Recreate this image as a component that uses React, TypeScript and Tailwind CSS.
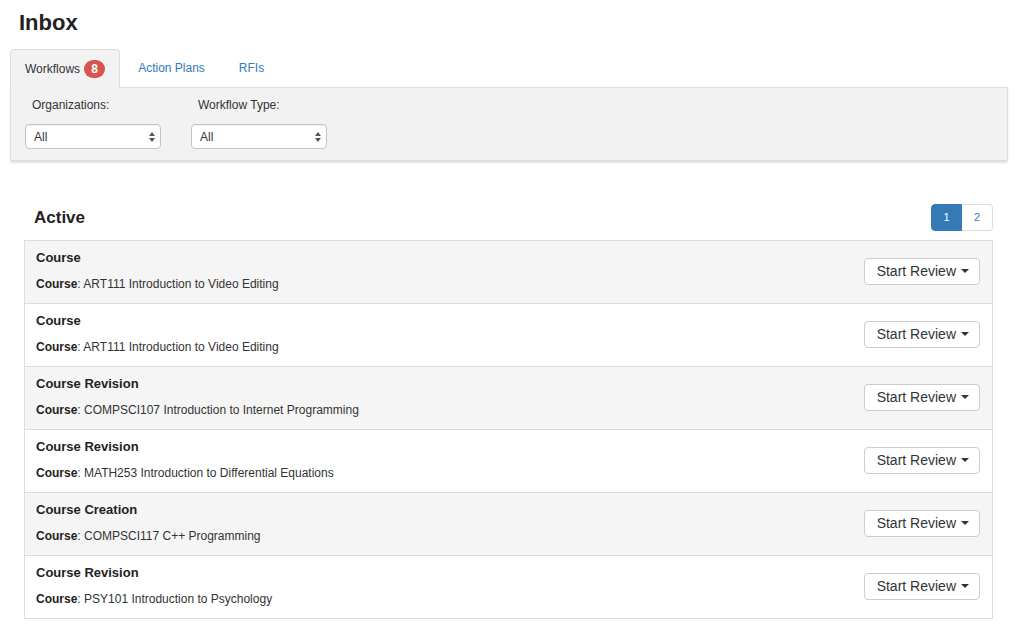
const rows = [
  { type: "Course", course: "ART111 Introduction to Video Editing" },
  { type: "Course", course: "ART111 Introduction to Video Editing" },
  { type: "Course Revision", course: "COMPSCI107 Introduction to Internet Programming" },
  { type: "Course Revision", course: "MATH253 Introduction to Differential Equations" },
  { type: "Course Creation", course: "COMPSCI117 C++ Programming" },
  { type: "Course Revision", course: "PSY101 Introduction to Psychology" },
];

const SelectBox = () => (
  <div className="relative w-[136px] h-[25px] rounded-[4px] border border-[#c4c4c4] bg-white shadow-[inset_0_1px_1px_rgba(0,0,0,0.05)] flex items-center pl-[8px] text-[12px] text-[#333]">
    All
    <svg className="absolute right-[5px] top-[7px]" width="6" height="10" viewBox="0 0 6 10">
      <path d="M3 0 L6 4 L0 4 Z" fill="#555" />
      <path d="M3 10 L6 6 L0 6 Z" fill="#555" />
    </svg>
  </div>
);

export default function App() {
  return (
    <div className="min-h-screen bg-white text-[#333] font-['Liberation_Sans',Arial,sans-serif]">
      <div className="pl-[10px] pr-[15px] pt-[9px]">
        <h1 className="pl-[9px] text-[22px] leading-[28px] font-bold text-[#222]">Inbox</h1>

        <div className="mt-[11px] flex items-end text-[12px]">
          <div className="relative z-10 -mb-px flex items-center h-[39px] px-[14px] rounded-t-[4px] border border-b-0 border-[#ddd] bg-[#f2f2f2] text-[#333]">
            Workflows
            <span className="ml-[4px] inline-flex items-center justify-center h-[18px] min-w-[21px] px-[6px] rounded-full bg-[#d9534f] text-white font-bold text-[12px]">
              8
            </span>
          </div>
          <div className="flex items-center h-[39px] pl-[18px] pr-[17px] text-[#337ab7]">Action Plans</div>
          <div className="flex items-center h-[39px] px-[17px] text-[#337ab7]">RFIs</div>
        </div>

        <div className="h-[74px] border border-[#ddd] bg-[#f2f2f2] rounded-b-[2px] shadow-[0_2px_2px_rgba(0,0,0,0.12)] px-[14px] pt-[8px]">
          <div className="flex gap-[30px]">
            <div>
              <div className="pl-[7px] text-[12px] leading-[18px]">Organizations:</div>
              <div className="mt-[10px]">
                <SelectBox />
              </div>
            </div>
            <div>
              <div className="pl-[7px] text-[12px] leading-[18px]">Workflow Type:</div>
              <div className="mt-[10px]">
                <SelectBox />
              </div>
            </div>
          </div>
        </div>
      </div>

      <div className="pl-[24px] pr-[30px] mt-[43px]">
        <div className="flex items-center justify-between">
          <h2 className="pl-[10px] text-[17px] font-bold text-[#222]">Active</h2>
          <div className="flex text-[11px]">
            <div className="w-[31px] h-[27px] flex items-center justify-center rounded-l-[4px] bg-[#337ab7] border border-[#337ab7] text-white">
              1
            </div>
            <div className="w-[31px] h-[27px] flex items-center justify-center rounded-r-[4px] border border-l-0 border-[#ddd] bg-white text-[#337ab7]">
              2
            </div>
          </div>
        </div>

        <div className="mt-[9px] border-b border-[#ddd]">
          {rows.map((r, i) => (
            <div
              key={i}
              className={`flex items-center justify-between border border-b-0 border-[#ddd] pl-[11px] pr-[12px] pt-[8px] pb-[10px] ${
                i % 2 === 0 ? "bg-[#f5f5f5]" : "bg-white"
              }`}
            >
              <div className="text-[12px]">
                <div className="font-bold text-[13px] leading-[18px] text-[#222]">{r.type}</div>
                <div className="mt-[8px] leading-[18px]">
                  <span className="font-bold text-[#222]">Course</span>: {r.course}
                </div>
              </div>
              <button className="h-[27px] flex items-center pl-[12px] pr-[10px] rounded-[4px] border border-[#ccc] bg-white text-[14px] text-[#333]">
                Start Review
                <svg className="ml-[5px]" width="8" height="4" viewBox="0 0 8 4">
                  <path d="M0 0 L8 0 L4 4 Z" fill="#333" />
                </svg>
              </button>
            </div>
          ))}
        </div>
      </div>
    </div>
  );
}
